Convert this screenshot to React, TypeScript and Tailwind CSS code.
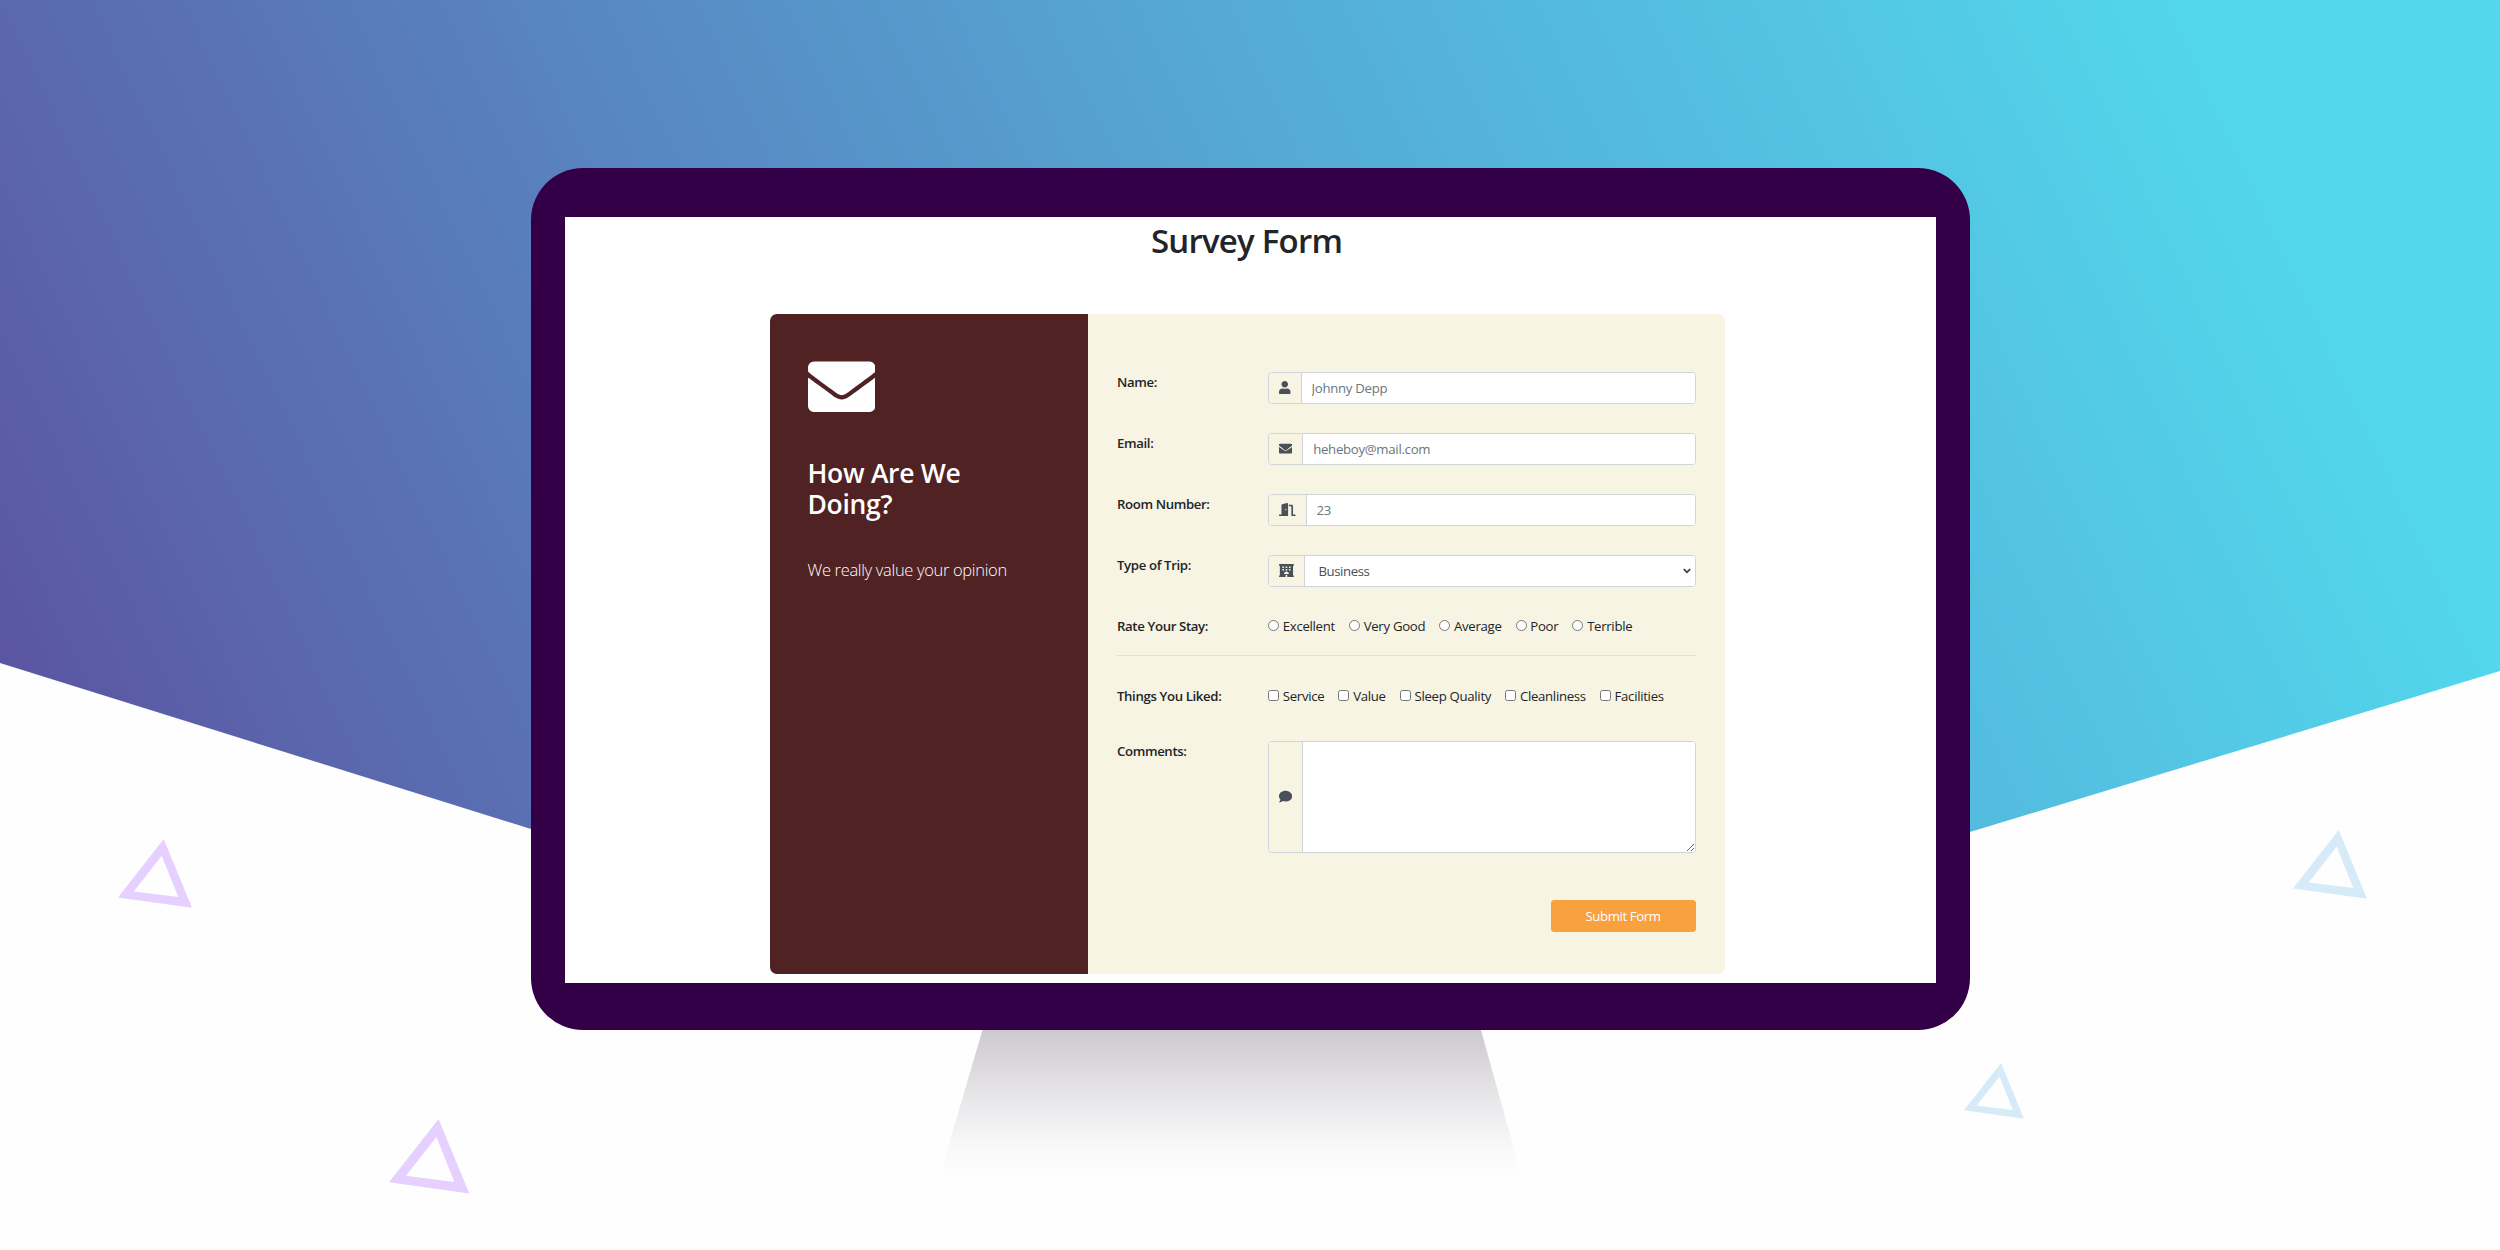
import type { ReactNode } from 'react';
import { FaComment, FaDoorOpen, FaEnvelope, FaHotel, FaUser } from 'react-icons/fa';

const ratings = ['Excellent', 'Very Good', 'Average', 'Poor', 'Terrible'];
const liked = ['Service', 'Value', 'Sleep Quality', 'Cleanliness', 'Facilities'];

function Triangle({ className }: { className: string }) {
  return (
    <svg viewBox="0 0 74 69" className={`absolute ${className}`} fill="currentColor" fillRule="evenodd" aria-hidden="true">
      <path d="M45.7 0 74 68.7 0 58.4ZM43.7 16.7 15.7 52.4 60.3 58Z" />
    </svg>
  );
}

function Backdrop() {
  return (
    <>
      <svg viewBox="0 0 2500 1250" className="absolute inset-0 h-full w-full" aria-hidden="true">
        <defs>
          <linearGradient id="sky" gradientUnits="userSpaceOnUse" x1="0" y1="640" x2="2040" y2="-320">
            <stop offset="0" stopColor="#5a56a2" />
            <stop offset="0.13" stopColor="#5a69af" />
            <stop offset="0.6" stopColor="#55a9d5" />
            <stop offset="1" stopColor="#52d7ec" />
          </linearGradient>
          <linearGradient id="stand" x1="0" y1="0" x2="0" y2="1">
            <stop offset="0" stopColor="#cdc9ce" />
            <stop offset="0.45" stopColor="#e7e6e9" />
            <stop offset="0.8" stopColor="#f9f9f9" />
            <stop offset="1" stopColor="#fefefe" />
          </linearGradient>
        </defs>
        <path d="M0 0H2500V671L1970 832L531 829L0 663Z" fill="url(#sky)" />
        <path d="M982.5 1030H1481L1522 1178H939Z" fill="url(#stand)" />
      </svg>
      <Triangle className="left-[118px] top-[839px] w-[74px] text-[#e6d0ff]" />
      <Triangle className="left-[389px] top-[1119px] w-[80.3px] text-[#e6d0ff]" />
      <Triangle className="left-[2293px] top-[830px] w-[74px] text-[#d7eaf8]" />
      <Triangle className="left-[1964px] top-[1063px] w-[60px] text-[#d7eaf8]" />
    </>
  );
}

function Row({ label, children }: { label: string; children: ReactNode }) {
  return (
    <div className="flex">
      <div className="w-[151px] shrink-0 font-semibold tracking-[-0.36px]">{label}</div>
      <div className="min-w-0 flex-1">{children}</div>
    </div>
  );
}

function Group({ icon, children }: { icon: ReactNode; children: ReactNode }) {
  return (
    <div className="flex min-h-[31.5px] overflow-hidden rounded-[3.5px] border border-[#ced4da] bg-white text-[#495057]">
      <span className="flex shrink-0 items-center border-r border-[#ced4da] bg-[#f8f4e3] px-[10px] text-[13.2px]">{icon}</span>
      {children}
    </div>
  );
}

function Choices({ type, options }: { type: 'radio' | 'checkbox'; options: string[] }) {
  return (
    <div className="flex gap-[14px]">
      {options.map((option) => (
        <label key={option} className="flex items-center whitespace-nowrap tracking-[-0.3px]">
          <input
            type={type}
            name={type === 'radio' ? 'rating' : option}
            className={type === 'radio' ? 'mr-[3.8px] size-[11px]' : 'relative -top-px mr-[3.8px] size-[11px]'}
          />
          {option}
        </label>
      ))}
    </div>
  );
}

const field = 'min-w-0 flex-1 bg-white px-[10px] pt-px tracking-[-0.28px] outline-none placeholder:text-[#6c757d]';

export default function App() {
  return (
    <main className="relative h-[1250px] w-[2500px] overflow-hidden bg-[#fefefe] pl-[531px] pt-[168px] font-['Open_Sans','Noto_Sans',sans-serif] text-[13.2px] leading-[20px] text-[#212529]">
      <Backdrop />
      <div className="relative h-[862px] w-[1439px] rounded-[52px] bg-[#330048] pl-[33.5px] pr-[34px] pt-[49px]">
        <div className="h-[766px] bg-white pt-[4px]">
          <h1 className="ml-[586.5px] whitespace-nowrap text-[33px] font-semibold leading-[40px] tracking-[-0.78px]">Survey Form</h1>
          <section className="ml-[205.5px] mt-[53px] flex h-[660px] w-[954.5px] overflow-hidden rounded-[7px] bg-[#f8f4e3]">
            <aside className="w-[318px] shrink-0 bg-[#502223] pl-[37.5px] pt-[39px] text-white">
              <FaEnvelope className="size-[67.5px]" />
              <h2 className="mt-[37px] text-[26.5px] font-semibold leading-[31.8px] tracking-[-0.3px]">
                How Are We
                <br />
                Doing?
              </h2>
              <p className="mt-[36.6px] text-[16.5px] font-light leading-[24px] tracking-[-0.33px]">We really value your opinion</p>
            </aside>
            <form className="flex-1 px-[29px] pt-[58px]">
              <div className="flex flex-col gap-[29.5px]">
                <Row label="Name:">
                  <Group icon={<FaUser className="w-[11.5px]" />}>
                    <input className={field} placeholder="Johnny Depp" />
                  </Group>
                </Row>
                <Row label="Email:">
                  <Group icon={<FaEnvelope />}>
                    <input className={field} placeholder="heheboy@mail.com" />
                  </Group>
                </Row>
                <Row label="Room Number:">
                  <Group icon={<FaDoorOpen className="h-[13.2px] w-[16.5px]" />}>
                    <input className={field} placeholder="23" />
                  </Group>
                </Row>
                <Row label="Type of Trip:">
                  <Group icon={<FaHotel className="h-[13.2px] w-[14.9px]" />}>
                    <div className="relative flex flex-1">
                      <select className="flex-1 appearance-none bg-white px-[13.5px] pt-px tracking-[-0.4px] outline-none">
                        <option>Business</option>
                      </select>
                      <svg viewBox="0 0 8 6" className="absolute right-[3.5px] top-[12px] w-[8px]" fill="none" stroke="#343a40" strokeWidth="1.7" aria-hidden="true">
                        <path d="M0.8 1 4 4.3 7.2 1" />
                      </svg>
                    </div>
                  </Group>
                </Row>
              </div>
              <div className="mt-[29px]">
                <Row label="Rate Your Stay:">
                  <Choices type="radio" options={ratings} />
                </Row>
              </div>
              <hr className="mb-[30px] mt-[19.5px] border-[#e1dfd1]" />
              <Row label="Things You Liked:">
                <Choices type="checkbox" options={liked} />
              </Row>
              <div className="mt-[35px]">
                <Row label="Comments:">
                  <Group icon={<FaComment />}>
                    <textarea className="block h-[110px] flex-1 resize bg-white outline-none" />
                  </Group>
                </Row>
              </div>
              <div className="mt-[46.7px] flex justify-end">
                <button type="button" className="h-[32px] w-[145px] rounded-[3.5px] bg-[#f9a03f] tracking-[-0.4px] text-white">
                  Submit Form
                </button>
              </div>
            </form>
          </section>
        </div>
      </div>
    </main>
  );
}
